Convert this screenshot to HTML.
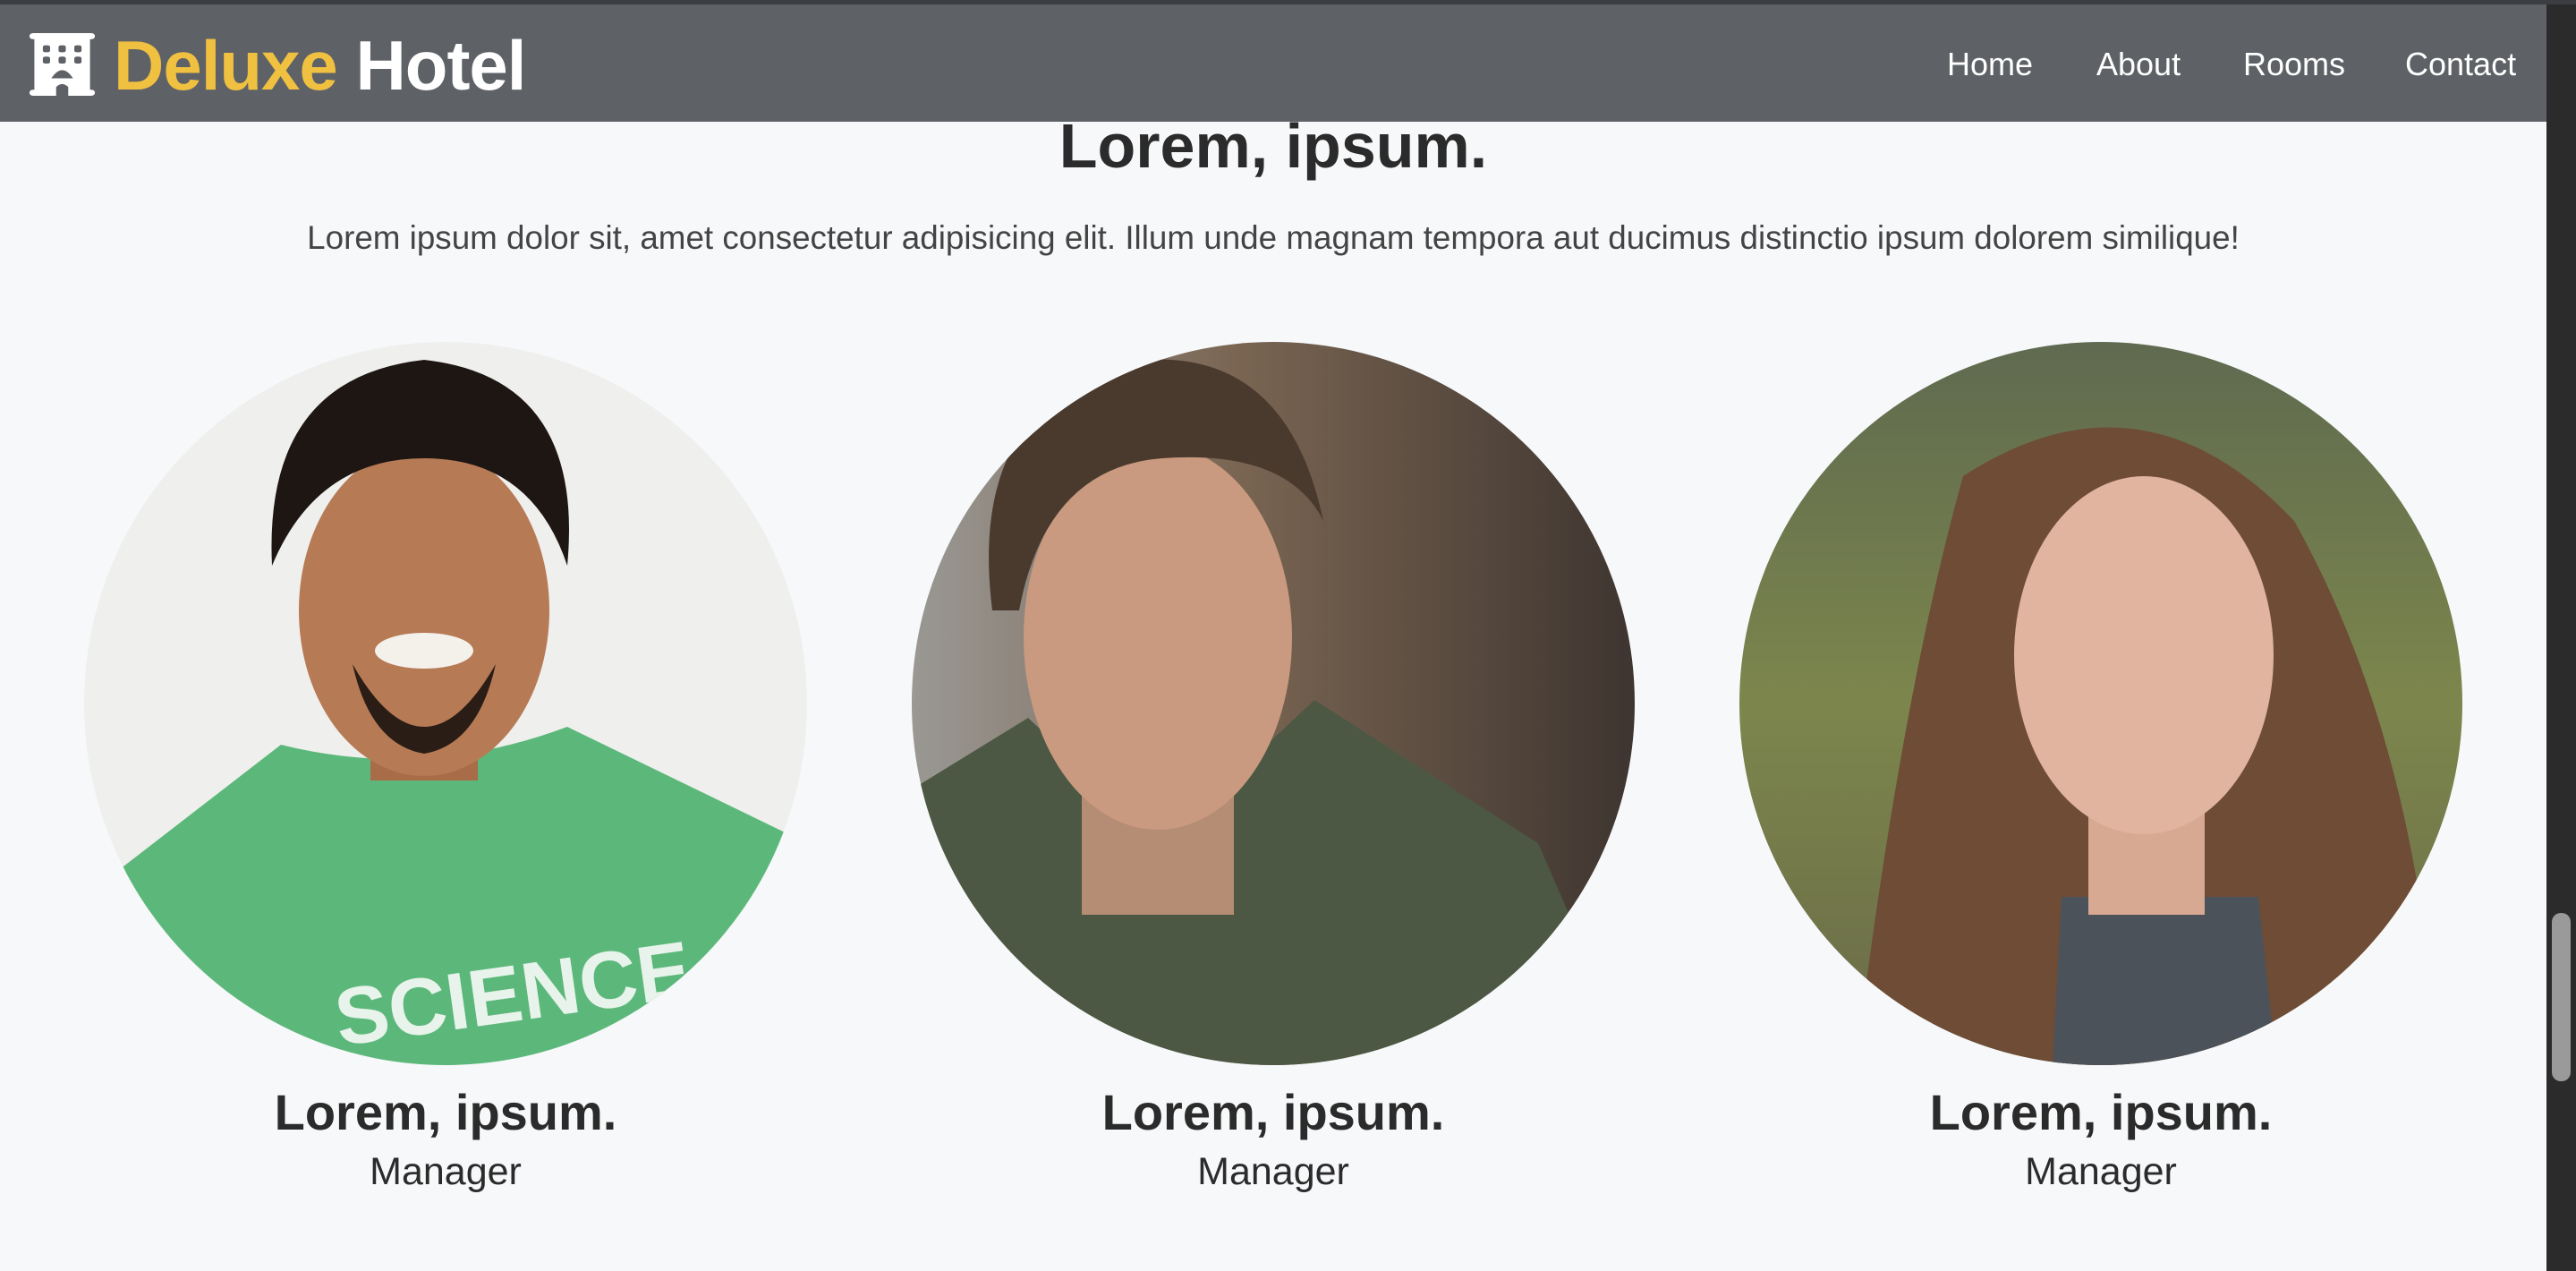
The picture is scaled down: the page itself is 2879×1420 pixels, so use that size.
<!DOCTYPE html>
<html><head><meta charset="utf-8"><style>
html,body{margin:0;padding:0}
body{width:2879px;height:1420px;overflow:hidden;background:#f7f8fa;font-family:"Liberation Sans",sans-serif;position:relative}
.top{position:absolute;left:0;top:0;width:2879px;height:5px;background:#3b3d43}
nav{position:absolute;left:0;top:5px;width:2846px;height:131px;background:#5e6166}
.logo{position:absolute;left:127px;top:23px;font-size:78px;font-weight:bold;color:#fff;letter-spacing:-1px}
.logo span{color:#f0c040}
.links{position:absolute;top:46px;font-size:36px;color:#fff}
.sb{position:absolute;right:0;top:5px;width:33px;height:1415px;background:#2b2b2b}
.thumb{position:absolute;right:6px;top:1015px;width:21px;height:188px;background:#9a9a9a;border-radius:10px}
h1{position:absolute;left:0;width:2846px;text-align:center;top:123px;margin:0;font-size:70px;color:#2b2b2b}
p.lead{position:absolute;left:0;width:2846px;text-align:center;top:245px;margin:0;font-size:36.8px;color:#444}
.nm{position:absolute;top:1210px;width:808px;text-align:center;font-size:56px;font-weight:bold;color:#2b2b2b}
.role{position:absolute;top:1285px;width:808px;text-align:center;font-size:43px;color:#2b2b2b}
.card{position:absolute;width:808px}
.card svg{display:block}
</style></head><body>
<div class="top"></div>
<nav>
<svg style="position:absolute;left:33px;top:32px" width="73" height="70" viewBox="0 0 54 72" preserveAspectRatio="none"><rect x="4" y="0" width="46" height="72" fill="#fff"/><rect x="0" y="0" width="54" height="7" rx="3" fill="#fff"/><rect x="0" y="65" width="54" height="7" rx="3" fill="#fff"/>
<g fill="#5e6166"><rect x="11" y="14" width="6" height="8" rx="2"/><rect x="24" y="14" width="6" height="8" rx="2"/><rect x="37" y="14" width="6" height="8" rx="2"/><rect x="11" y="27" width="6" height="8" rx="2"/><rect x="24" y="27" width="6" height="8" rx="2"/><rect x="37" y="27" width="6" height="8" rx="2"/><path d="M18 52 Q27 33 36 52Z"/><path d="M22 72 V62 Q27 55 32 62 V72Z"/></g></svg>
<div class="logo"><span>Deluxe</span> Hotel</div>
<div class="links" style="left:2176px">Home</div>
<div class="links" style="left:2343px">About</div>
<div class="links" style="left:2507px">Rooms</div>
<div class="links" style="left:2688px">Contact</div>
</nav>
<div class="sb"><div class="thumb"></div></div>
<h1>Lorem, ipsum.</h1>
<p class="lead">Lorem ipsum dolor sit, amet consectetur adipisicing elit. Illum unde magnam tempora aut ducimus distinctio ipsum dolorem similique!</p>

<div class="card" style="left:94px;top:382px"><svg width="808" height="808"><defs><clipPath id="c1"><circle cx="404" cy="404" r="404"/></clipPath></defs><g clip-path="url(#c1)">
<rect width="808" height="808" fill="#efefed"/>
<path d="M0 620 L220 450 Q380 490 540 430 L808 560 L808 808 L0 808Z" fill="#5cb87a"/>
<rect x="320" y="380" width="120" height="110" fill="#a86c48"/>
<ellipse cx="380" cy="300" rx="140" ry="185" fill="#b67a55"/>
<path d="M210 250 Q200 40 380 20 Q560 40 540 250 Q500 130 380 130 Q260 130 210 250Z" fill="#1d1613"/>
<path d="M300 360 Q380 500 460 360 Q440 450 380 460 Q320 450 300 360Z" fill="#2a1d16"/>
<ellipse cx="380" cy="345" rx="55" ry="20" fill="#f4f0ea"/>
<text x="280" y="770" font-size="90" font-weight="bold" fill="#e8f3ec" font-family="Liberation Sans" transform="rotate(-8 400 740)">SCIENCE</text>
</g></svg></div>

<div class="card" style="left:1019px;top:382px"><svg width="808" height="808"><defs><clipPath id="c2"><circle cx="404" cy="404" r="404"/></clipPath><linearGradient id="g2" x1="0" x2="1"><stop offset="0" stop-color="#9a9894"/><stop offset=".45" stop-color="#7a6552"/><stop offset="1" stop-color="#3e3530"/></linearGradient></defs><g clip-path="url(#c2)">
<rect width="808" height="808" fill="url(#g2)"/>
<path d="M0 500 L130 420 L280 560 L450 400 L700 560 L808 808 L0 808Z" fill="#4c5843"/>
<rect x="190" y="420" width="170" height="220" fill="#b58c74"/>
<ellipse cx="275" cy="330" rx="150" ry="215" fill="#c99a80"/>
<path d="M90 300 Q60 60 260 20 Q420 10 460 200 Q420 120 280 130 Q150 140 120 300Z" fill="#4a3a2e"/>
</g></svg></div>

<div class="card" style="left:1944px;top:382px"><svg width="808" height="808"><defs><clipPath id="c3"><circle cx="404" cy="404" r="404"/></clipPath><linearGradient id="g3" x1="0" y1="0" x2="0" y2="1"><stop offset="0" stop-color="#5f6a50"/><stop offset=".5" stop-color="#7c864c"/><stop offset="1" stop-color="#6a6a48"/></linearGradient></defs><g clip-path="url(#c3)">
<rect width="808" height="808" fill="url(#g3)"/>
<path d="M560 560 L808 640 L808 808 L520 808Z" fill="#cdb8a2"/>
<path d="M130 808 Q180 400 250 150 Q450 20 620 200 Q760 450 780 808Z" fill="#6e4c36"/>
<path d="M360 620 L580 620 L600 808 L350 808Z" fill="#4b525a"/>
<rect x="390" y="500" width="130" height="140" fill="#d7a892"/>
<ellipse cx="452" cy="350" rx="145" ry="200" fill="#e0b49e"/>
</g></svg></div>

<div class="nm" style="left:94px">Lorem, ipsum.</div><div class="role" style="left:94px">Manager</div>
<div class="nm" style="left:1019px">Lorem, ipsum.</div><div class="role" style="left:1019px">Manager</div>
<div class="nm" style="left:1944px">Lorem, ipsum.</div><div class="role" style="left:1944px">Manager</div>
</body></html>
